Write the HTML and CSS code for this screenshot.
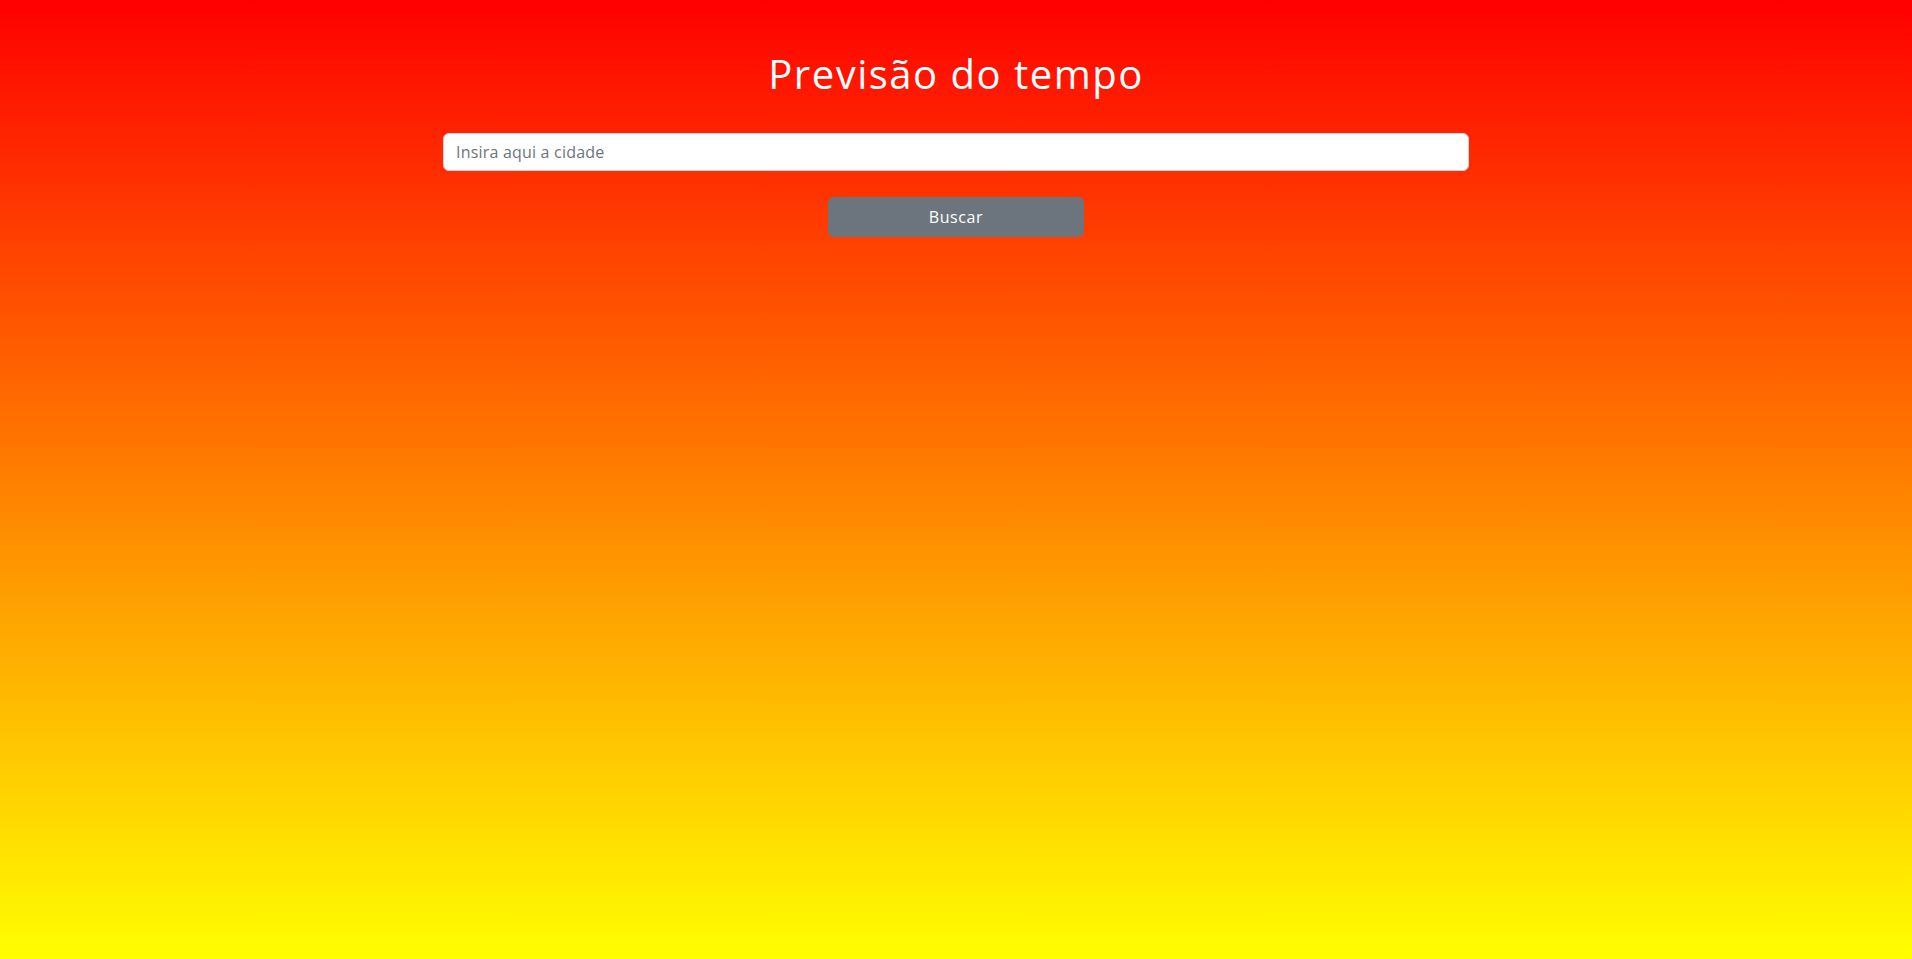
FILE: index.html
```html
<!DOCTYPE html>
<html lang="pt-BR">
<head>
<meta charset="utf-8">
<title>Previsão do tempo</title>
<link rel="stylesheet" href="styles.css">
</head>
<body>
<main class="app">
  <h1 class="title">Previsão do tempo</h1>
  <form class="search" onsubmit="return false">
    <input class="search-input" type="text" placeholder="Insira aqui a cidade">
    <button class="search-btn" type="submit">Buscar</button>
  </form>
</main>
</body>
</html>
```
FILE: styles.css
```css
html, body {
  margin: 0;
  padding: 0;
  height: 100%;
}
body {
  min-height: 100vh;
  background: linear-gradient(to bottom, #ff0000, #ffff00);
  font-family: "Open Sans", "DejaVu Sans", sans-serif;
}
.app {
  display: flex;
  flex-direction: column;
  align-items: center;
  padding-top: 50px;
}
.title {
  margin: 0;
  font-weight: 400;
  font-size: 40px;
  line-height: 48px;
  color: #ffffff;
  letter-spacing: 1.5px;
}
.search {
  display: flex;
  flex-direction: column;
  align-items: center;
  width: 1026px;
  margin-top: 35px;
  gap: 26px;
}
.search-input {
  box-sizing: border-box;
  width: 100%;
  height: 38px;
  padding: 6px 12px;
  border: 1px solid #ced4da;
  border-radius: 6px;
  background: #ffffff;
  font-family: inherit;
  font-size: 16px;
  letter-spacing: 0.2px;
  color: #212529;
  outline: none;
}
.search-input::placeholder {
  color: #6c757d;
}
.search-btn {
  box-sizing: border-box;
  width: 256px;
  height: 40px;
  border: 0;
  border-radius: 6px;
  background: #6c757d;
  color: #ffffff;
  font-family: inherit;
  font-size: 16px;
  font-weight: 500;
  letter-spacing: 0.6px;
  cursor: pointer;
}
```
